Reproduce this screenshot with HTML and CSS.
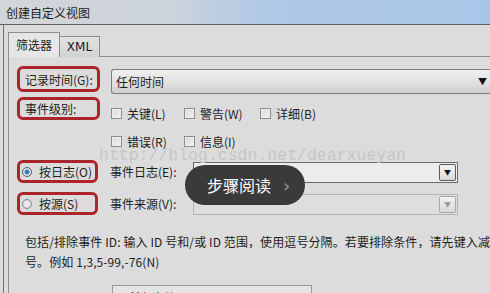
FILE: index.html
```html
<!DOCTYPE html>
<html lang="zh-CN">

<head>
  <meta charset="UTF-8">
  <meta name="viewport" content="width=device-width, initial-scale=1.0">
  <title>创建自定义视图</title>
  <link rel="stylesheet" href="styles.css">
</head>

<body>
  <!-- Title bar of the dialog -->
  <div class="titlebar">创建自定义视图</div>

  <div class="window">
    <div class="tabs">
      <div class="tab active">筛选器</div>
      <div class="tab">XML</div>
    </div>

    <div class="panel">
      <div class="row row-time">
        <div class="mark">记录时间(G):</div>
        <div class="combo combo-time">
          <span>任何时间</span>
          <span class="arrow">&#9660;</span>
        </div>
      </div>

      <div class="row row-level">
        <div class="mark mark-level">事件级别:</div>
        <div class="checks">
          <label class="check"><span class="box"></span>关键(L)</label>
          <label class="check"><span class="box"></span>警告(W)</label>
          <label class="check"><span class="box"></span>详细(B)</label>
          <label class="check"><span class="box"></span>错误(R)</label>
          <label class="check"><span class="box"></span>信息(I)</label>
        </div>
      </div>

      <div class="row row-log">
        <div class="mark mark-radio"><span class="radio on"></span>按日志(O)</div>
        <div class="field-label">事件日志(E):</div>
        <div class="combo combo-small">
          <span class="btn">&#9660;</span>
        </div>
      </div>

      <div class="row row-source">
        <div class="mark mark-radio"><span class="radio"></span>按源(S)</div>
        <div class="field-label">事件来源(V):</div>
        <div class="combo combo-small disabled">
          <span class="btn">&#9660;</span>
        </div>
      </div>

      <p class="hint">包括/排除事件 ID: 输入 ID 号和/或 ID 范围，使用逗号分隔。若要排除条件，请先键入减<br>号。例如 1,3,5-99,-76(N)</p>

      <div class="idbox">&lt;所有事件 ID&gt;</div>
    </div>
  </div>

  <!-- Things drawn over the dialog -->
  <div class="watermark">http://blog.csdn.net/dearxueyan</div>
  <div class="pill">步骤阅读<span class="chev">&#8250;</span></div>
</body>

</html>
```

FILE: styles.css
```css
/* Basic page */
body {
  margin: 0;
  width: 490px;
  height: 293px;
  overflow: hidden;
  background: #dcdcdc;
  font-family: "Noto Sans CJK SC", "Noto Sans", sans-serif;
  font-size: 12px;
  color: #1c1c1c;
}

/* Title bar */
.titlebar {
  height: 25px;
  box-sizing: border-box;
  padding-left: 6px;
  line-height: 25px;
  font-size: 12px;
  border-bottom: 1px solid #5c5f63;
  background: linear-gradient(to right, #d3d6d9 0%, #ccd3dc 35%, #afc8e5 55%, #a9c6e8 100%);
}

.window {
  margin-left: 3px;
  border-left: 1px solid #6e6e6e;
  height: 268px;
  overflow: hidden;
  padding-left: 4px;
}

/* Tabs */
.tabs {
  display: flex;
  align-items: flex-end;
  padding-top: 7px;
  margin-bottom: -1px;
}

.tab {
  height: 21px;
  width: 40px;
  box-sizing: border-box;
  border: 1px solid #8e8e8e;
  border-left: none;
  border-bottom: none;
  background: linear-gradient(#e2e2e2, #d2d2d2);
  text-align: center;
  line-height: 20px;
  font-family: "DejaVu Sans", sans-serif;
  font-size: 12px;
}

.tab.active {
  position: relative;
  z-index: 1;
  height: 25px;
  width: 52px;
  border-left: 1px solid #8e8e8e;
  background: #e6e6e6;
  line-height: 24px;
  font-family: "Noto Sans CJK SC", sans-serif;
}

/* Tab page */
.panel {
  border-top: 1px solid #8e8e8e;
  border-left: 1px solid #8e8e8e;
  padding: 9px 0 0 8px;
}

.row {
  display: flex;
  white-space: nowrap;
}

/* Red marker boxes around the labels */
.mark {
  width: 83px;
  height: 26px;
  box-sizing: border-box;
  border: 3px solid #ac242c;
  border-radius: 6px;
  padding-left: 5px;
  display: flex;
  align-items: center;
  flex-shrink: 0;
  white-space: nowrap;
}

.mark-level {
  height: 23px;
}

.mark-radio {
  width: 81px;
  height: 23px;
  padding-left: 2px;
}

/* Combo boxes */
.combo {
  display: flex;
  align-items: center;
  justify-content: space-between;
  box-sizing: border-box;
  border: 1px solid #7d7d7d;
  border-radius: 3px;
  background: linear-gradient(#f0f0f0, #e2e2e2 50%, #cfcfcf);
}

.combo-time {
  flex: 1;
  height: 25px;
  margin: 3px 0 0 11px;
  padding: 0 3px 0 4px;
  border-right: none;
  border-radius: 3px 0 0 3px;
}

.arrow {
  font-size: 9px;
  color: #111;
}

.combo-small {
  width: 265px;
  height: 21px;
  margin-left: 1px;
  padding-right: 1px;
  justify-content: flex-end;
  border-radius: 0;
  border-color: #6a6a6a;
  background: #ececec;
}

.combo-small.disabled {
  border-color: #b4b4b4;
  background: #dedede;
}

.btn {
  width: 17px;
  height: 17px;
  box-sizing: border-box;
  border: 1px solid #5a5a5a;
  border-radius: 2px;
  background: linear-gradient(#f4f4f4, #d8d8d8);
  font-size: 7px;
  line-height: 15px;
  text-align: center;
  color: #111;
}

.disabled .btn {
  border-color: #a8a8a8;
  color: #9a9a9a;
}

/* Event level check boxes */
.row-level {
  margin-top: 3px;
}

.checks {
  display: grid;
  grid-template-columns: 73px 76px auto;
  row-gap: 10px;
  padding: 7px 0 0 11px;
}

.check {
  display: flex;
  align-items: center;
  height: 18px;
}

.box {
  width: 11px;
  height: 11px;
  box-sizing: border-box;
  border: 1px solid #8c8c8c;
  background: linear-gradient(135deg, #d6d6d6, #f6f6f6);
  box-shadow: inset 0 0 0 1px #efefef;
  margin-right: 5px;
}

/* Radio rows */
.row-log {
  margin-top: 10px;
}

.row-source {
  margin-top: 9px;
}

.row-log .combo {
  margin-top: 2px;
}

.row-source .combo {
  margin-top: 2px;
}

.radio {
  width: 10px;
  height: 10px;
  box-sizing: border-box;
  border: 1px solid #8a8a8a;
  border-radius: 50%;
  background: radial-gradient(circle, #f4f4f4, #cfcfcf);
  margin-right: 7px;
  flex-shrink: 0;
}

.radio.on {
  background: radial-gradient(circle, #1d5fb0 0, #3f86d6 2px, #e8e8e8 3px, #cfcfcf 100%);
  border-color: #5a5a5a;
}

.field-label {
  width: 82px;
  margin-left: 12px;
  line-height: 23px;
}

/* Help text */
.hint {
  margin: 17px 0 0 8px;
  line-height: 20px;
  white-space: nowrap;
  letter-spacing: 0.1px;
}

.idbox {
  margin: 13px 0 0 95px;
  height: 24px;
  width: 200px;
  box-sizing: border-box;
  border: 1px solid #9a9a9a;
  background: #e4e4e4;
  padding: 3px 8px;
}

/* Watermark and reading overlay sit over the dialog */
.watermark {
  position: absolute;
  left: 99px;
  top: 146px;
  font-family: "Liberation Mono", monospace;
  font-size: 16.5px;
  color: #c6c6c6;
}

.pill {
  position: absolute;
  left: 185px;
  top: 165px;
  width: 120px;
  height: 40px;
  box-sizing: border-box;
  border-radius: 20px;
  background: #3a3a3a;
  color: #fff;
  font-size: 16px;
  line-height: 40px;
  padding-left: 22px;
}

.chev {
  margin-left: 12px;
  color: #9a9a9a;
  font-family: "DejaVu Sans", sans-serif;
  font-size: 18px;
}
```
